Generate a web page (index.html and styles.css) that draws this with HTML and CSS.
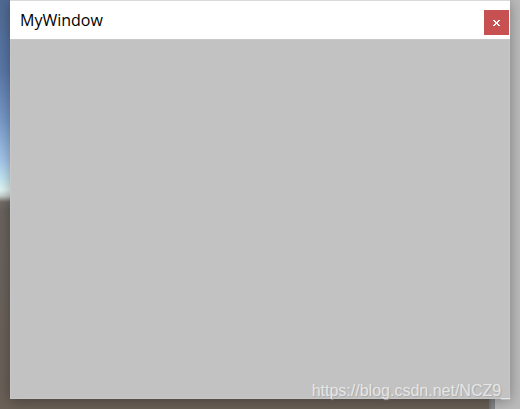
FILE: index.html
```html
<!DOCTYPE html>
<html lang="en">
<head>
<meta charset="utf-8">
<title>MyWindow</title>
<link rel="stylesheet" href="styles.css">
</head>
<body>
<div class="desktop">
  <div class="scene"></div>
  <div class="divider"></div>
  <div class="panel"></div>
</div>
<main class="window">
  <header class="titlebar">
    <h1 class="title">MyWindow</h1>
    <button class="close" type="button" aria-label="Close">
      <svg width="7" height="6" viewBox="0 0 7 6" shape-rendering="crispEdges" aria-hidden="true">
        <path fill="#fff" d="M0 0h2v1h1v1h1V1h1V0h2v1H6v1H5v2h1v1h1v1H5V5H4V4H3v1H2v1H0V5h1V4h1V2H1V1H0z"/>
      </svg>
    </button>
  </header>
  <section class="content">
    <span class="watermark">https://blog.csdn.net/NCZ9_</span>
  </section>
</main>
</body>
</html>
```
FILE: styles.css
```css
* {
  box-sizing: border-box;
}

body {
  margin: 0;
  min-height: 100vh;
  display: flex;
  padding: 0 10px 10px;
  overflow: hidden;
}

.desktop {
  position: absolute;
  inset: 0;
  display: flex;
}

.scene {
  flex: 1;
  background: linear-gradient(#506a94 0, #5a79a9 70px, #7a9bcb 120px, #a6c8ee 160px, #c4e8f4 178px, #e6f8f6 190px, #c8d2d0 196px, #736d69 202px, #6b645f 210px, #6b6158 100%);
}

.divider {
  width: 6px;
  background: #858789;
  border-left: 2px solid #77797c;
}

.panel {
  width: 25px;
  background: #bcbcbc;
}

.window {
  position: relative;
  flex: 1;
  display: flex;
  flex-direction: column;
  border-top: 1px solid #d9d9d9;
  background: #c2c2c2;
  box-shadow: 0 2px 14px rgba(0, 0, 0, 0.35);
}

.titlebar {
  display: flex;
  align-items: center;
  justify-content: space-between;
  height: 38px;
  padding: 0 1px 0 10px;
  background: #fff;
}

.title {
  margin: 0;
  font: 400 16px/24px "Open Sans", "Noto Sans", sans-serif;
  color: #000;
}

.close {
  display: grid;
  place-items: center;
  width: 25px;
  height: 25px;
  margin-top: 5px;
  padding: 0;
  border: 0;
  background: #c75050;
}

.content {
  flex: 1;
  display: flex;
  align-items: flex-end;
  justify-content: flex-end;
  box-shadow: inset 0 0 0 1px #c8c8c8;
}

.watermark {
  font: 16px/16px "Liberation Sans", Arial, sans-serif;
  color: #e6e6e6;
  text-shadow: 1px 1px 1px #a8a8a8;
}
```
